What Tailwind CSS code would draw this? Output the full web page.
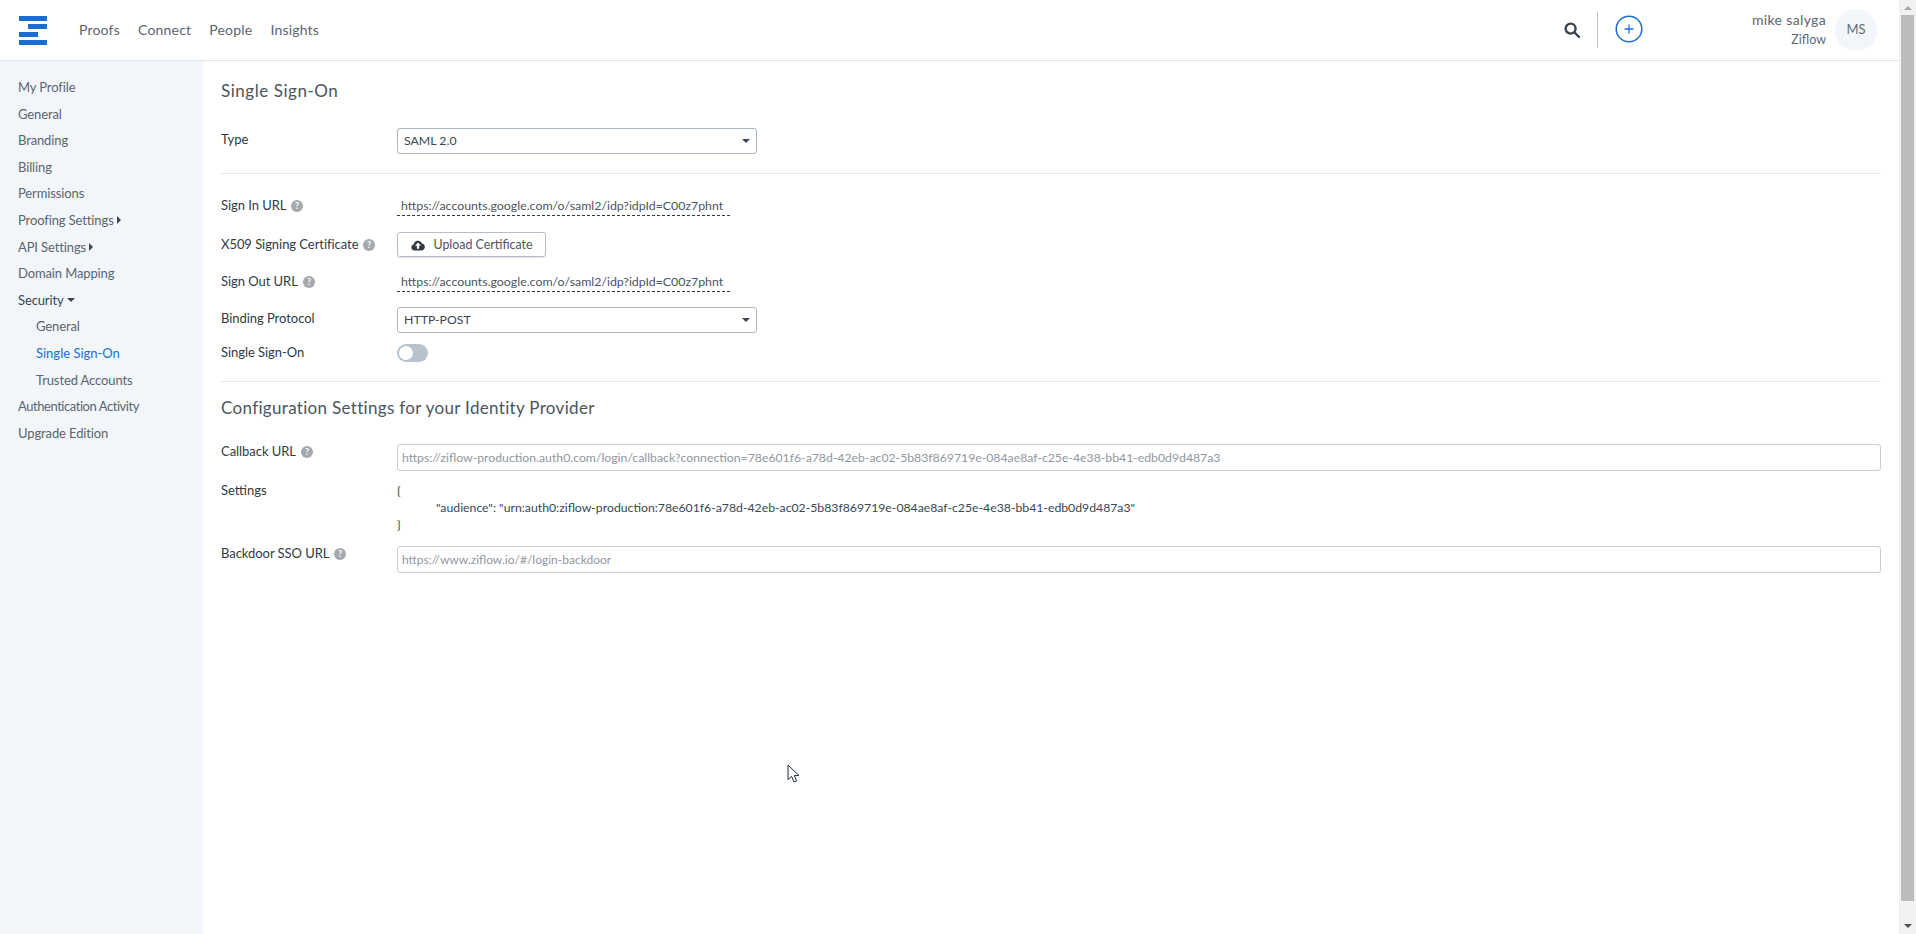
<!DOCTYPE html>
<html lang="en">
<head>
    <meta charset="UTF-8">
    <meta name="viewport" content="width=device-width, initial-scale=1.0">
    <title>Single Sign-On</title>
    <script src="https://cdn.jsdelivr.net/npm/@tailwindcss/browser@4"></script>
</head>
<body class="relative flex h-screen w-full overflow-hidden bg-white font-['Lato','Open_Sans',sans-serif] text-[13px] text-[#3a4654]">
    <div class="flex h-full min-w-0 flex-1 flex-col">
        <!-- Top bar -->
        <header class="flex h-[61px] shrink-0 items-center border-b border-[#dfe7ee] bg-white">
            <svg class="ml-[19px] mt-[1px] h-[29px] w-[28px]" viewBox="0 0 28 29" fill="#1b6ed0">
                <rect x="0" y="0" width="28" height="5"/>
                <rect x="9" y="8" width="19" height="5"/>
                <rect x="0" y="16" width="19" height="5"/>
                <rect x="0" y="24" width="28" height="5"/>
            </svg>
            <nav class="ml-[32px] -mt-[2px] flex gap-[18px] text-[14px] tracking-[0.2px] text-[#5a6570]">
                <a href="#">Proofs</a>
                <a href="#">Connect</a>
                <a href="#">People</a>
                <a href="#">Insights</a>
            </nav>
            <div class="ml-auto flex items-center">
                <svg class="-mt-[1px] h-[16px] w-[16px]" viewBox="0 0 16 16" fill="none" stroke="#3a4450" stroke-width="2.4">
                    <circle cx="6.6" cy="6.6" r="5"/>
                    <path d="M10.4 10.4 L15 15" stroke-linecap="round"/>
                </svg>
                <div class="ml-[17px] h-[36px] w-px bg-[#b6c2cc]"></div>
                <svg class="ml-[17px] -mt-[3px] h-[28px] w-[28px]" viewBox="0 0 28 28" fill="none" stroke="#1b6ed0">
                    <circle cx="14" cy="14" r="12.8" stroke-width="1.5"/>
                    <path d="M14 9.5 V18.5 M9.5 14 H18.5" stroke-width="1.3"/>
                </svg>
                <div class="ml-[109px] flex flex-col items-end leading-[20px]">
                    <span class="text-[14px] tracking-[0.35px] text-[#5a6570]">mike salyga</span>
                    <span class="text-[12.5px] text-[#5a6a7a]">Ziflow</span>
                </div>
                <div class="ml-[9px] mr-[22px] flex h-[42px] w-[42px] items-center justify-center rounded-full bg-[#f2f6fa] text-[13px] text-[#5f6d7a]">MS</div>
            </div>
        </header>

        <div class="flex min-h-0 flex-1">
            <!-- Sidebar -->
            <aside class="w-[203px] shrink-0 bg-[#f2f6fa] pl-[18px] pt-[13px] text-[13px] leading-[26.6px] tracking-[-0.12px] text-[#5a6570]">
                <ul>
                    <li>My Profile</li>
                    <li>General</li>
                    <li>Branding</li>
                    <li>Billing</li>
                    <li>Permissions</li>
                    <li class="flex items-center gap-[3px]">Proofing Settings
                        <span class="h-0 w-0 border-y-[4px] border-l-[4px] border-y-transparent border-l-[#3a4654]"></span>
                    </li>
                    <li class="flex items-center gap-[3px]">API Settings
                        <span class="h-0 w-0 border-y-[4px] border-l-[4px] border-y-transparent border-l-[#3a4654]"></span>
                    </li>
                    <li>Domain Mapping</li>
                    <li class="flex items-center gap-[3px] text-[#3a4654]">Security
                        <span class="h-0 w-0 border-x-[4px] border-t-[4px] border-x-transparent border-t-[#3a4654]"></span>
                    </li>
                    <li class="pl-[18px]">General</li>
                    <li class="pl-[18px] tracking-normal text-[#1b6ed0]">Single Sign-On</li>
                    <li class="pl-[18px]">Trusted Accounts</li>
                    <li class="tracking-[-0.45px]">Authentication Activity</li>
                    <li>Upgrade Edition</li>
                </ul>
            </aside>

            <!-- Settings form -->
            <main class="min-w-0 flex-1 pl-[18px] pr-[18px] pt-[17px]">
                <h1 class="h-[26px] text-[17px] leading-[26px] tracking-[0.55px] text-[#4a5560]">Single Sign-On</h1>

                <div class="mt-[24px] flex h-[26px]">
                    <label class="w-[176px] leading-[23px] text-[#2f3a46]">Type</label>
                    <div class="flex h-[26px] w-[360px] items-center justify-between rounded-[3px] border border-[#a9b5c0] pl-[6px] pr-[6px] text-[12.3px] text-[#3a4654]">
                        SAML 2.0
                        <span class="h-0 w-0 border-x-[4.5px] border-t-[4.5px] border-x-transparent border-t-[#3a4450]"></span>
                    </div>
                </div>
                <hr class="mt-[19px] border-[#e3e8ec]">

                <div class="mt-[22px] flex h-[20px] items-center">
                    <label class="flex w-[176px] items-center gap-[5px] tracking-[-0.05px] text-[#2f3a46]">Sign In URL
                        <svg class="h-[12px] w-[12px]" viewBox="0 0 12 12"><circle cx="6" cy="6" r="6" fill="#a3a9ae"/><text x="6" y="9.3" font-size="9" font-weight="700" fill="#fff" text-anchor="middle">?</text></svg>
                    </label>
                    <span class="w-[333px] border-b border-dashed border-[#2f3a46] pl-[4px] text-[12.35px] leading-[18px] text-[#4a5560]">https://accounts.google.com/o/saml2/idp?idpId=C00z7phnt</span>
                </div>

                <div class="mt-[16px] flex h-[25px] items-center">
                    <label class="flex w-[176px] items-center gap-[5px] tracking-[-0.05px] text-[#2f3a46]">X509 Signing Certificate
                        <svg class="h-[12px] w-[12px]" viewBox="0 0 12 12"><circle cx="6" cy="6" r="6" fill="#a3a9ae"/><text x="6" y="9.3" font-size="9" font-weight="700" fill="#fff" text-anchor="middle">?</text></svg>
                    </label>
                    <button class="flex h-[25px] w-[149px] items-center justify-center gap-[9px] rounded-[3px] border border-[#b4bec8] pt-[1px] text-[12.4px] text-[#4a5560] shadow-[0_1px_1px_rgba(0,0,0,0.12)]">
                        <svg class="h-[12px] w-[14px]" viewBox="0 0 14 12" fill="#333a42">
                            <path d="M3.3 11.5 A3.2 3.2 0 0 1 2.8 5.2 A4.3 4.3 0 0 1 11 4.4 A3.6 3.6 0 0 1 10.6 11.5 Z"/>
                            <path d="M7 3.6 L10 6.8 H8.1 V9.8 H5.9 V6.8 H4 Z" fill="#fff"/>
                        </svg>
                        Upload Certificate
                    </button>
                </div>

                <div class="mt-[15px] flex h-[20px] items-center">
                    <label class="flex w-[176px] items-center gap-[5px] tracking-[-0.05px] text-[#2f3a46]">Sign Out URL
                        <svg class="h-[12px] w-[12px]" viewBox="0 0 12 12"><circle cx="6" cy="6" r="6" fill="#a3a9ae"/><text x="6" y="9.3" font-size="9" font-weight="700" fill="#fff" text-anchor="middle">?</text></svg>
                    </label>
                    <span class="w-[333px] border-b border-dashed border-[#2f3a46] pl-[4px] text-[12.35px] leading-[18px] text-[#4a5560]">https://accounts.google.com/o/saml2/idp?idpId=C00z7phnt</span>
                </div>

                <div class="mt-[15px] flex h-[26px]">
                    <label class="w-[176px] leading-[22px] tracking-[-0.05px] text-[#2f3a46]">Binding Protocol</label>
                    <div class="flex h-[26px] w-[360px] items-center justify-between rounded-[3px] border border-[#a9b5c0] pl-[6px] pr-[6px] text-[12.3px] text-[#3a4654]">
                        HTTP-POST
                        <span class="h-0 w-0 border-x-[4.5px] border-t-[4.5px] border-x-transparent border-t-[#3a4450]"></span>
                    </div>
                </div>

                <div class="mt-[11px] flex h-[18px] items-center">
                    <label class="w-[176px] tracking-[-0.05px] text-[#2f3a46]">Single Sign-On</label>
                    <div class="flex h-[18px] w-[31px] items-center rounded-full bg-[#b6c2cc] pl-[2px]">
                        <span class="h-[14px] w-[14px] rounded-full bg-white"></span>
                    </div>
                </div>
                <hr class="mt-[19px] border-[#e3e8ec]">

                <h2 class="mt-[14px] h-[24px] text-[17px] leading-[24px] tracking-[0.32px] text-[#4a5560]">Configuration Settings for your Identity Provider</h2>

                <div class="mt-[24px] flex h-[27px]">
                    <label class="flex h-[16px] w-[176px] items-center gap-[5px] tracking-[-0.05px] text-[#2f3a46]">Callback URL
                        <svg class="h-[12px] w-[12px]" viewBox="0 0 12 12"><circle cx="6" cy="6" r="6" fill="#a3a9ae"/><text x="6" y="9.3" font-size="9" font-weight="700" fill="#fff" text-anchor="middle">?</text></svg>
                    </label>
                    <input class="h-[27px] min-w-0 flex-1 rounded-[3px] border border-[#c6ced6] pl-[4px] text-[12.25px] placeholder:text-[#8f979f]" type="text" placeholder="https://ziflow-production.auth0.com/login/callback?connection=78e601f6-a78d-42eb-ac02-5b83f869719e-084ae8af-c25e-4e38-bb41-edb0d9d487a3">
                </div>

                <div class="mt-[11px] flex">
                    <label class="w-[176px] leading-[17px] text-[#2f3a46]">Settings</label>
                    <div class="text-[12.25px] leading-[17px] text-[#3a4654]">
                        <p>{</p>
                        <p class="pl-[39px]">"audience": "urn:auth0:ziflow-production:78e601f6-a78d-42eb-ac02-5b83f869719e-084ae8af-c25e-4e38-bb41-edb0d9d487a3"</p>
                        <p>}</p>
                    </div>
                </div>

                <div class="mt-[13px] flex h-[27px]">
                    <label class="flex h-[16px] w-[176px] items-center gap-[5px] tracking-[-0.05px] text-[#2f3a46]">Backdoor SSO URL
                        <svg class="h-[12px] w-[12px]" viewBox="0 0 12 12"><circle cx="6" cy="6" r="6" fill="#a3a9ae"/><text x="6" y="9.3" font-size="9" font-weight="700" fill="#fff" text-anchor="middle">?</text></svg>
                    </label>
                    <input class="h-[27px] min-w-0 flex-1 rounded-[3px] border border-[#c6ced6] pl-[4px] text-[12px] placeholder:text-[#8f979f]" type="text" placeholder="https://www.ziflow.io/#/login-backdoor">
                </div>
            </main>
        </div>
    </div>

    <!-- Scrollbar -->
    <div class="flex h-full w-[17px] shrink-0 flex-col items-center bg-[#f1f1f1]">
        <div class="flex h-[15px] w-full items-center justify-center">
            <span class="h-0 w-0 border-x-[4px] border-b-[4px] border-x-transparent border-b-[#a3a3a3]"></span>
        </div>
        <div class="h-[886px] w-[13px] bg-[#bcbcbc]"></div>
        <div class="mt-auto flex h-[17px] w-full items-center justify-center">
            <span class="h-0 w-0 border-x-[4px] border-t-[4px] border-x-transparent border-t-[#505050]"></span>
        </div>
    </div>

    <!-- Mouse pointer from the capture -->
    <svg class="absolute left-[787px] top-[764px] h-[20px] w-[13px]" viewBox="0 0 13 20" fill="#fff" stroke="#222c3a" stroke-width="1">
        <path d="M1 1 V15.5 L4.6 12.4 L7 18 L9.6 17 L7.3 11.6 H12 Z"/>
    </svg>
</body>
</html>
